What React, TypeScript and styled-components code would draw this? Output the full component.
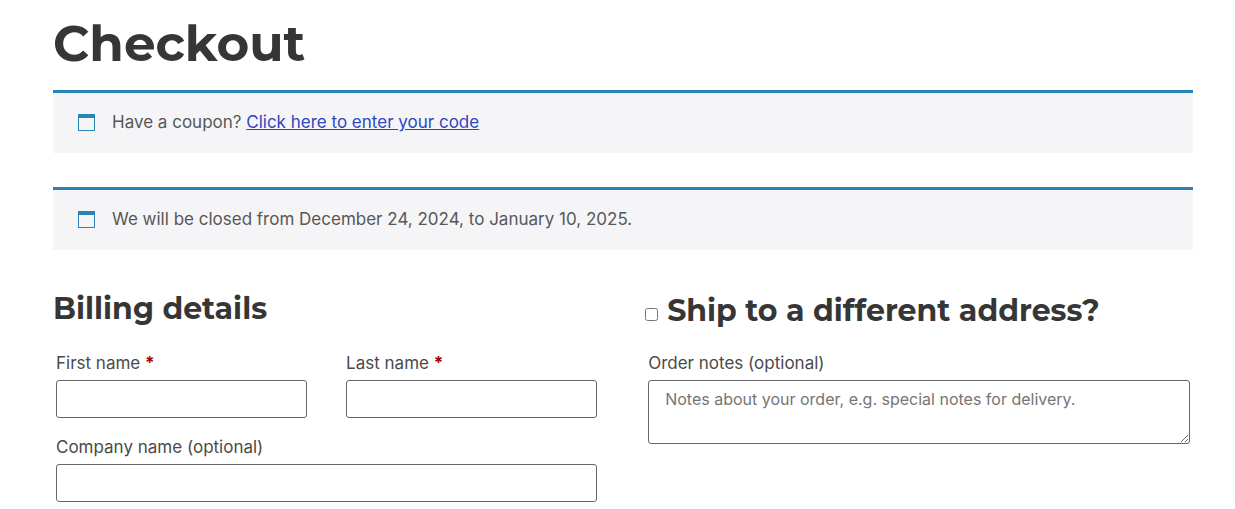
import React from "react";
import styled, { createGlobalStyle } from "styled-components";

const GlobalStyle = createGlobalStyle`
  *, *::before, *::after { box-sizing: border-box; }
  body {
    margin: 0;
    background: #fff;
    color: #575757;
    font-family: Inter, "Liberation Sans", sans-serif;
    font-size: 17px;
    font-weight: 400;
    line-height: 26px;
  }
`;

const Page = styled.main`
  padding: 14px 42px 7px 53px;
`;

const Title = styled.h1`
  margin: 0 0 16px;
  color: #363636;
  font-family: Montserrat, Inter, sans-serif;
  font-size: 50px;
  font-weight: 700;
  line-height: 60px;
`;

const Notice = styled.div`
  display: flex;
  align-items: center;
  gap: 16px;
  margin-bottom: 34px;
  padding: 16px 25px 18px;
  border-top: 3px solid #2a83b5;
  background: #f5f5f8;
`;

const NoticeLink = styled.a`
  color: #2f45c0;
  text-decoration: underline;
`;

const Columns = styled.form`
  display: grid;
  grid-template-columns: 48% 1fr;
  gap: 45px;
  padding-top: 6px;
`;

const Heading = styled.h3`
  display: flex;
  align-items: flex-start;
  min-height: 40px;
  margin: 0 0 20px;
  color: #363636;
  font-family: Montserrat, Inter, sans-serif;
  font-size: 30px;
  font-weight: 700;
  line-height: 38px;
`;

const ShipLabel = styled.label`
  display: flex;
  align-items: center;
  gap: 9px;
  padding-top: 2px;
`;

const Checkbox = styled.input`
  width: 13px;
  height: 13px;
  margin: 6px 0 0;
`;

const Fields = styled.div`
  display: grid;
  grid-template-columns: 1fr 1fr;
  gap: 16px 39px;
  padding: 0 3px;
`;

const Field = styled.div<{ $wide?: boolean }>`
  display: flex;
  flex-direction: column;
  gap: 4px;
  grid-column: ${({ $wide }) => ($wide ? "1 / -1" : "auto")};
`;

const Label = styled.label`
  color: #4a4a4a;
`;

const Required = styled.abbr`
  color: #a00000;
  font-weight: 700;
  text-decoration: none;
`;

const TextInput = styled.input`
  width: 100%;
  height: 38px;
  padding: 0 16px;
  border: 1px solid #666;
  border-radius: 3px;
  background: #fff;
  font: inherit;
`;

const Notes = styled.textarea`
  display: block;
  width: 100%;
  height: 64px;
  padding: 6px 16px;
  border: 1px solid #666;
  border-radius: 3px;
  background: #fff;
  font: inherit;
  font-size: 16px;
  line-height: 24px;
  resize: vertical;

  &::placeholder { color: #757575; }
`;

const WindowIcon = () => (
  <svg width="18" height="18" viewBox="0 0 18 18" aria-hidden="true">
    <path fill="#2a83b5" fillRule="evenodd" d="M0 1H17V18H0ZM1 5V17H16V5Z" />
  </svg>
);

export default function App() {
  return (
    <>
      <GlobalStyle />
      <Page>
        <Title>Checkout</Title>
        <Notice>
          <WindowIcon />
          <span>
            Have a coupon? <NoticeLink href="#coupon">Click here to enter your code</NoticeLink>
          </span>
        </Notice>
        <Notice>
          <WindowIcon />
          <span>We will be closed from December 24, 2024, to January 10, 2025.</span>
        </Notice>
        <Columns>
          <section>
            <Heading>Billing details</Heading>
            <Fields>
              <Field>
                <Label htmlFor="first-name">
                  First name <Required title="required">*</Required>
                </Label>
                <TextInput id="first-name" type="text" required />
              </Field>
              <Field>
                <Label htmlFor="last-name">
                  Last name <Required title="required">*</Required>
                </Label>
                <TextInput id="last-name" type="text" required />
              </Field>
              <Field $wide>
                <Label htmlFor="company">Company name (optional)</Label>
                <TextInput id="company" type="text" />
              </Field>
            </Fields>
          </section>
          <section>
            <Heading>
              <ShipLabel>
                <Checkbox type="checkbox" />
                <span>Ship to a different address?</span>
              </ShipLabel>
            </Heading>
            <Fields>
              <Field $wide>
                <Label htmlFor="notes">Order notes (optional)</Label>
                <Notes id="notes" placeholder="Notes about your order, e.g. special notes for delivery." />
              </Field>
            </Fields>
          </section>
        </Columns>
      </Page>
    </>
  );
}
